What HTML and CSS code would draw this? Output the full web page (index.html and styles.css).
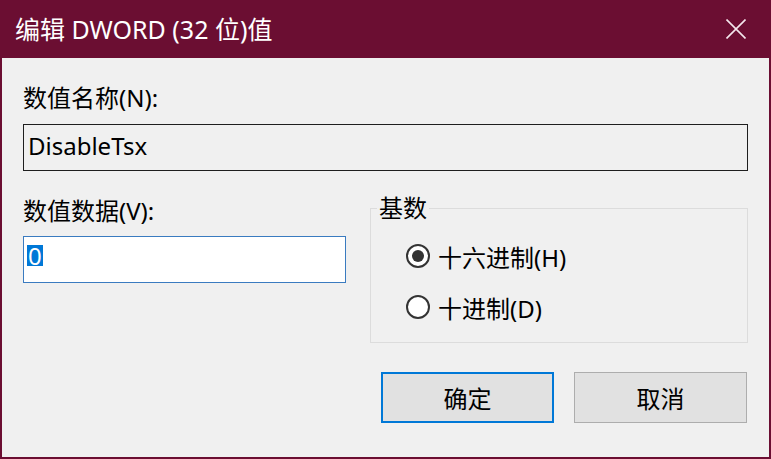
FILE: index.html
```html
<!DOCTYPE html>
<html lang="zh-CN">
<head>
<meta charset="utf-8">
<title>编辑 DWORD (32 位)值</title>
<link rel="stylesheet" href="styles.css">
</head>
<body>
<div class="window">
  <div class="titlebar">
    <span class="title">编辑 DWORD (32 位)值</span>
    <span class="close">
      <svg width="20" height="20" viewBox="0 0 20 20"><path d="M0.5 0.5 L19.5 19.5 M19.5 0.5 L0.5 19.5" stroke="#f4e6ec" stroke-width="1.6" fill="none"/></svg>
    </span>
  </div>
  <div class="client">
    <div class="label">数值名称(N):</div>
    <div class="field name-field">DisableTsx</div>
    <div class="row">
      <div class="left">
        <div class="label">数值数据(V):</div>
        <div class="field data-field"><span class="sel">0</span></div>
      </div>
      <fieldset class="group">
        <legend>基数</legend>
        <div class="radio"><span class="circle checked"></span><span>十六进制(H)</span></div>
        <div class="radio"><span class="circle"></span><span>十进制(D)</span></div>
      </fieldset>
    </div>
    <div class="buttons">
      <div class="btn default">确定</div>
      <div class="btn">取消</div>
    </div>
  </div>
</div>
</body>
</html>
```
FILE: styles.css
```css
html, body {
  margin: 0;
  padding: 0;
}
body {
  width: 771px;
  height: 459px;
  overflow: hidden;
  font-family: "Noto Sans", "Noto Sans CJK SC", sans-serif;
  font-size: 24px;
  color: #000;
}
.window {
  width: 771px;
  height: 459px;
  box-sizing: border-box;
  background: #6b0e32;
  padding: 0 2px 2px 2px;
  display: flex;
  flex-direction: column;
}
.titlebar {
  height: 58px;
  flex: none;
  display: flex;
  align-items: center;
  padding: 0 23px 0 13px;
  color: #fff;
}
.title {
  font-size: 25px;
  line-height: 30px;
}
.close {
  margin-left: auto;
  display: flex;
  width: 20px;
  height: 20px;
}
.client {
  flex: 1;
  background: #f0f0f0;
  padding: 25px 21px 0 21px;
}
.label {
  line-height: 30px;
  height: 30px;
}
.field {
  box-sizing: border-box;
  height: 47px;
}
.name-field {
  margin-top: 11px;
  border: 1px solid #1e1e1e;
  background: #f0f0f0;
  display: flex;
  align-items: center;
  padding: 0 0 4px 4px;
}
.row {
  display: flex;
  margin-top: 25px;
}
.left {
  width: 323px;
  flex: none;
}
.data-field {
  margin-top: 10px;
  border: 1px solid #3a7bc0;
  background: #fff;
  padding: 2px 3px;
}
.sel {
  display: inline-block;
  height: 21px;
  line-height: 21px;
  background: #0078d7;
  color: #fff;
  padding: 0 1px;
}
.group {
  margin: 0 0 0 24px;
  width: 378px;
  box-sizing: border-box;
  border: 1px solid #dcdcdc;
  padding: 18px 0 17px 0;
  min-width: 0;
}
.group legend {
  margin-left: 6px;
  padding: 0 2px;
  line-height: 24px;
}
.radio {
  display: flex;
  align-items: center;
  height: 36px;
  gap: 8px;
  margin-left: 35px;
}
.radio + .radio {
  margin-top: 15px;
}
.circle {
  width: 24px;
  height: 24px;
  box-sizing: border-box;
  border: 2px solid #333;
  border-radius: 50%;
  background: #fff;
  display: flex;
  align-items: center;
  justify-content: center;
}
.circle.checked::after {
  content: "";
  width: 12px;
  height: 12px;
  border-radius: 50%;
  background: #333;
}
.buttons {
  display: flex;
  justify-content: flex-end;
  gap: 20px;
  margin-top: 29px;
  margin-right: 1px;
}
.btn {
  width: 173px;
  height: 51px;
  box-sizing: border-box;
  background: #e1e1e1;
  border: 1px solid #adadad;
  display: flex;
  align-items: center;
  justify-content: center;
}
.btn.default {
  border: 2px solid #0078d7;
}
```
